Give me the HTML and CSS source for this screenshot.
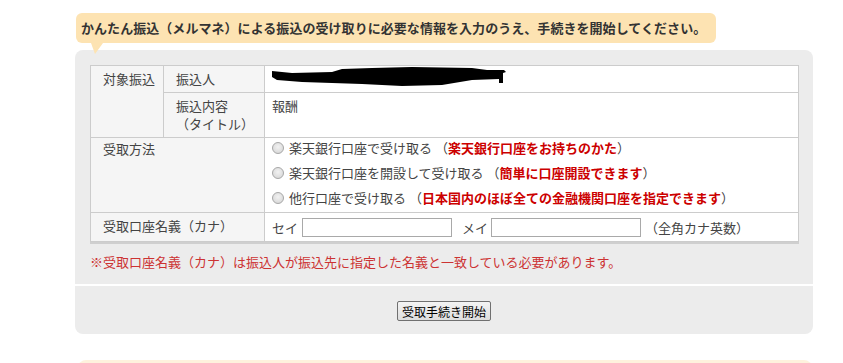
FILE: index.html
```html
<!DOCTYPE html>
<html lang="ja">
<head>
<meta charset="utf-8">
<title>かんたん振込（メルマネ）受け取り</title>
<link rel="stylesheet" href="styles.css">
</head>
<body>
<div class="wrap">
  <p class="bubble">かんたん振込（メルマネ）による振込の受け取りに必要な情報を入力のうえ、手続きを開始してください。</p>
  <div class="panel">
    <div class="panel-main">
      <table class="form">
        <colgroup><col class="c1"><col class="c2"><col class="c3"></colgroup>
        <tr>
          <th rowspan="2" class="lab">対象振込</th>
          <th class="lab">振込人</th>
          <td class="val"><svg class="redact" width="236" height="21" viewBox="0 0 236 21"><path d="M0 5 L20 7 L60 6 L70 3 L100 2 L140 1 L200 2 L215 4 L232 4 L234 6 L231 7 L231 17 L227 17 L227 13 L200 14 L170 19 L130 20 L90 18 L60 17 L30 16 L5 14 L0 11 Z" fill="#000"/></svg></td>
        </tr>
        <tr>
          <th class="lab">振込内容<br>（タイトル）</th>
          <td class="val">報酬</td>
        </tr>
        <tr class="method">
          <th colspan="2" class="lab">受取方法</th>
          <td class="val opts">
            <label class="opt"><input type="radio" name="m" class="radio">楽天銀行口座で受け取る （<em>楽天銀行口座をお持ちのかた</em>）</label>
            <label class="opt"><input type="radio" name="m" class="radio">楽天銀行口座を開設して受け取る （<em>簡単に口座開設できます</em>）</label>
            <label class="opt"><input type="radio" name="m" class="radio">他行口座で受け取る （<em>日本国内のほぼ全ての金融機関口座を指定できます</em>）</label>
          </td>
        </tr>
        <tr>
          <th colspan="2" class="lab">受取口座名義（カナ）</th>
          <td class="val">
            <div class="kana"><span>セイ</span><input type="text" class="txt sei"><span>メイ</span><input type="text" class="txt mei"><span>（全角カナ英数）</span></div>
          </td>
        </tr>
      </table>
      <p class="note">※受取口座名義（カナ）は振込人が振込先に指定した名義と一致している必要があります。</p>
    </div>
    <div class="panel-foot"><button type="button" class="btn">受取手続き開始</button></div>
  </div>
  <div class="bubble2"></div>
</div>
</body>
</html>
```

FILE: styles.css
```css
html, body {
  margin: 0;
  padding: 0;
  background: #fff;
}
body {
  font-family: "Noto Sans CJK JP", "Noto Sans", sans-serif;
  font-size: 13px;
  color: #444;
}
.wrap {
  width: 738px;
  margin-left: 75px;
  padding-top: 13px;
}
.bubble {
  position: relative;
  display: inline-block;
  margin: 0 0 7px 1px;
  padding: 0 10px 0 5px;
  height: 30px;
  line-height: 30px;
  background: #fde3b2;
  border-radius: 6px;
  font-weight: bold;
  color: #333;
  letter-spacing: 0.05px;
}
.bubble::after {
  content: "";
  position: absolute;
  left: 15px;
  bottom: -11px;
  border-left: 4px solid transparent;
  border-right: 8px solid transparent;
  border-top: 11px solid #fde3b2;
}
.panel-main {
  background: #ececec;
  border-radius: 8px 8px 0 0;
  padding: 15px 14px 13px 15px;
}
.form {
  width: 709px;
  border-collapse: collapse;
  background: #fff;
  box-shadow: 0 2px 0 #cfcfcf;
  table-layout: fixed;
}
.c1 { width: 73px; }
.c2 { width: 101px; }
.form th, .form td {
  border: 1px solid #cccccc;
  padding: 4px 8px 4px 12px;
  line-height: 18px;
  text-align: left;
  vertical-align: top;
  font-weight: normal;
}
.form th.lab {
  background: #f5f5f5;
  color: #444;
}
.form td.val {
  padding-left: 7px;
  background: #fff;
}
.redact {
  display: block;
  margin: -4px 0 -1px 0;
}
.method th.lab {
  padding-top: 1px;
  line-height: 20px;
}
.opts {
  padding-top: 0 !important;
}
.opt {
  display: flex;
  align-items: center;
  height: 20px;
  line-height: 20px;
  margin-bottom: 5px;
  white-space: nowrap;
}
.opt:last-child {
  margin-bottom: 0;
}
.radio {
  appearance: none;
  -webkit-appearance: none;
  width: 12px;
  height: 12px;
  margin: 0 5px 0 0;
  border: 1px solid #a8a8a8;
  border-radius: 50%;
  background: radial-gradient(circle at 50% 40%, #f2f2f2 0, #dcdcdc 70%, #cfcfcf 100%);
  box-sizing: border-box;
  flex: none;
}
.opt em {
  font-style: normal;
  font-weight: bold;
  color: #cc0000;
}
.kana {
  display: flex;
  align-items: center;
  height: 19px;
  margin-top: 1px;
}
.txt {
  box-sizing: border-box;
  width: 150px;
  height: 19px;
  border: 1px solid #a9a9a9;
  padding: 0 2px;
  margin: 0;
  background: #fff;
  font: inherit;
}
.sei { margin: 0 10px 0 4px; }
.mei { margin: 0 4px 0 3px; }
.note {
  margin: 11px 0 0 0;
  line-height: 18px;
  color: #cc3333;
}
.panel-foot {
  margin-top: 2px;
  background: #ececec;
  border-radius: 0 0 8px 8px;
  padding: 15px 0 13px;
  text-align: center;
  height: 20px;
}
.btn {
  height: 20px;
  padding: 0 4px;
  margin: 0;
  border: 1px solid #707070;
  border-radius: 2px;
  background: linear-gradient(#f4f4f4, #dddddd);
  font-family: "Noto Sans CJK JP", sans-serif;
  font-size: 12px;
  line-height: 17px;
  color: #000;
  vertical-align: top;
}
.bubble2 {
  margin: 26px 0 0 3px;
  width: 734px;
  height: 20px;
  background: #fef2dd;
  border-radius: 8px 8px 0 0;
}
```
